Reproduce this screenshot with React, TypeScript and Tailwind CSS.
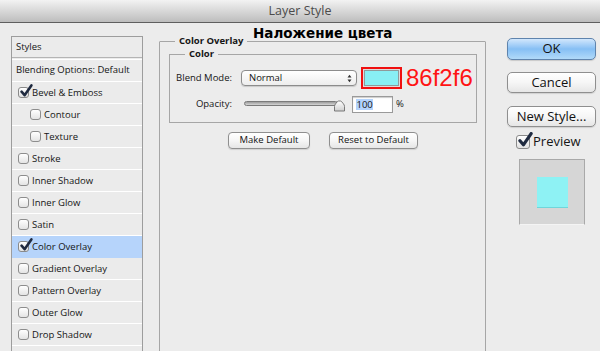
import React from "react";

const Check = ({ size = 11, big = false }: { size?: number; big?: boolean }) => (
  <span
    className={
      "relative inline-block shrink-0 rounded-[3px] border border-[#8a8a8a] bg-gradient-to-b from-white to-[#e2e2e2] shadow-[inset_0_1px_0_rgba(255,255,255,0.8)] " +
      (big ? "w-[14px] h-[14px]" : "w-[11px] h-[11px]")
    }
  >
    <svg
      viewBox="0 0 12 12"
      width={size + 3}
      height={size + 3}
      className="absolute left-[0px] top-[-4px]"
    >
      <path
        d="M2.2 6.6 L4.8 9.6 L10.6 1.2"
        fill="none"
        stroke="#1f2a40"
        strokeWidth={big ? 2.4 : 2.2}
        strokeLinecap="round"
        strokeLinejoin="round"
      />
    </svg>
  </span>
);

const Box = () => (
  <span className="inline-block w-[11px] h-[11px] shrink-0 rounded-[3px] border border-[#8d8d8d] bg-gradient-to-b from-white to-[#e4e4e4]" />
);

type Item = { label: string; checked?: boolean; indent?: boolean; active?: boolean };

const items: Item[] = [
  { label: "Bevel & Emboss", checked: true },
  { label: "Contour", indent: true },
  { label: "Texture", indent: true },
  { label: "Stroke" },
  { label: "Inner Shadow" },
  { label: "Inner Glow" },
  { label: "Satin" },
  { label: "Color Overlay", checked: true, active: true },
  { label: "Gradient Overlay" },
  { label: "Pattern Overlay" },
  { label: "Outer Glow" },
  { label: "Drop Shadow" },
];

const MacButton = ({ children, className = "" }: { children: React.ReactNode; className?: string }) => (
  <div
    className={
      "flex items-center justify-center rounded-[4px] border border-[#8f8f8f] bg-gradient-to-b from-white via-[#f6f6f6] to-[#e6e6e6] shadow-[0_1px_1px_rgba(0,0,0,0.12)] text-[#111] " +
      className
    }
  >
    {children}
  </div>
);

export default function App() {
  return (
    <div className="w-[600px] h-[351px] overflow-hidden bg-[#ececec] font-['Open_Sans',sans-serif] text-[#151515]">
      {/* Title bar */}
      <div className="h-[23px] border-b border-[#5f5f5f] bg-gradient-to-b from-[#f3f3f3] to-[#bdbdbd] flex items-center justify-center text-[12.5px] text-[#4b4b4b]">
        Layer Style
      </div>

      <div className="flex items-start pl-[11px] pt-[11px]">
        {/* Left list */}
        <div className="mt-[2px] w-[132px] h-[330px] shrink-0 border border-[#9d9d9d] bg-[#ebebeb] text-[9.5px]">
          <div className="h-[20px] flex items-center pl-[4px]">Styles</div>
          <div className="h-[3px] border-t border-[#b4b4b4] border-b border-b-white" />
          <div className="h-[22px] flex items-center pl-[4px] border-b border-white">
            Blending Options: Default
          </div>
          {items.map((it) => (
            <div
              key={it.label}
              className={
                "h-[22px] flex items-center gap-[3px] border-b " +
                (it.active ? "bg-[#b6d4fb] border-[#b6d4fb] " : "border-white ") +
                (it.indent ? "pl-[18px]" : "pl-[6px]")
              }
            >
              {it.checked ? <Check /> : <Box />}
              <span className="leading-none">{it.label}</span>
            </div>
          ))}
        </div>

        {/* Middle */}
        <div className="relative ml-[16px] w-[327px] shrink-0">
          <fieldset className="h-[320px] border border-[#a6a6a6] rounded-[1px]">
            <legend className="ml-[15px] px-[4px] text-[9.5px] font-bold leading-[14px]">Color Overlay</legend>
            <fieldset className="ml-[9px] w-[308px] border border-[#a6a6a6] pb-[9px]">
              <legend className="ml-[15px] px-[4px] text-[9.5px] font-bold leading-[12px]">Color</legend>
              <div className="mt-[7px] flex items-center h-[22px] text-[9.5px]">
                <div className="w-[62px] text-right">Blend Mode:</div>
                <div className="ml-[9px] w-[116px] h-[16px] rounded-[4px] border border-[#8c8c8c] bg-gradient-to-b from-white to-[#ededed] shadow-[0_1px_1px_rgba(0,0,0,0.15)] flex items-center pl-[7px] pr-[4px] justify-between">
                  <span>Normal</span>
                  <svg width="5" height="9" viewBox="0 0 5 9">
                    <path d="M0.5 3.5 L2.5 0.8 L4.5 3.5 Z M0.5 5.5 L2.5 8.2 L4.5 5.5 Z" fill="#333" />
                  </svg>
                </div>
                <div className="ml-[4px] w-[41px] h-[22px] border-2 border-[#f01010] p-[1px] bg-[#dcdcdc]">
                  <div className="w-full h-full border border-[#8f9a9a] bg-[#88eff4]" />
                </div>
                <div className="ml-[4px] text-[24px] leading-[22px] text-[#ff1414] font-['Liberation_Sans',Arial,sans-serif]">
                  86f2f6
                </div>
              </div>
              <div className="mt-[7px] flex items-center h-[17px] text-[9.5px]">
                <div className="w-[62px] text-right">Opacity:</div>
                <div className="relative ml-[12px] w-[101px] h-[16px]">
                  <div className="absolute left-0 top-[4px] w-[94px] h-[5px] rounded-full border border-[#7a7a7a] bg-gradient-to-b from-[#9c9c9c] to-[#d6d6d6]" />
                  <svg className="absolute left-[90px] top-[0px]" width="11" height="15" viewBox="0 0 11 15">
                    <defs>
                      <linearGradient id="th" x1="0" y1="0" x2="0" y2="1">
                        <stop offset="0" stopColor="#ffffff" />
                        <stop offset="1" stopColor="#cfcfcf" />
                      </linearGradient>
                    </defs>
                    <path
                      d="M0.5 14 L0.5 9.5 Q0.5 8 1.6 6.8 L3.6 4.4 Q4 4 4.6 4 L6.4 4 Q7 4 7.4 4.4 L9.4 6.8 Q10.5 8 10.5 9.5 L10.5 14 Z"
                      fill="url(#th)"
                      stroke="#6d6d6d"
                      strokeWidth="0.9"
                    />
                  </svg>
                </div>
                <div className="ml-[7px] w-[41px] h-[17px] border border-[#9a9a9a] bg-white shadow-[inset_0_1px_1px_rgba(0,0,0,0.2)] flex items-center pl-[3px]">
                  <span className="bg-[#b3d3fc] leading-[11px] px-[0.5px]">100</span>
                </div>
                <div className="ml-[3px]">%</div>
              </div>
            </fieldset>
            <div className="mt-[9px] flex pl-[68px] gap-[19px] text-[9.5px]">
              <MacButton className="w-[82px] h-[17px]">Make Default</MacButton>
              <MacButton className="w-[89px] h-[17px]">Reset to Default</MacButton>
            </div>
          </fieldset>
          <div className="absolute left-[94px] top-[-8px] text-[13.5px] leading-[14px] font-bold text-black font-['DejaVu_Sans',sans-serif]">
            Наложение цвета
          </div>
        </div>

        {/* Right */}
        <div className="ml-[21px] w-[89px] shrink-0 flex flex-col text-[13px]">
          <div className="mt-[4px] h-[22px] rounded-[5px] border border-[#5f84ad] bg-gradient-to-b from-[#d2e7fc] via-[#86bff4] to-[#b1daf9] shadow-[0_1px_1px_rgba(0,0,0,0.15)] flex items-center justify-center text-[#111]">
            OK
          </div>
          <MacButton className="mt-[12px] h-[21px] rounded-[5px]">Cancel</MacButton>
          <MacButton className="mt-[13px] h-[21px] rounded-[5px]">New Style...</MacButton>
          <div className="mt-[5px] h-[19px] flex items-center pl-[9px] gap-[3px]">
            <Check size={13} big />
            <span>Preview</span>
          </div>
          <div className="mt-[8px] ml-[12px] w-[66px] h-[66px] border border-[#a9a9a9] border-b-[#f4f4f4] bg-[#d6d6d6] flex items-center justify-center">
            <div className="w-[31px] h-[31px] bg-[#8ef2f4] border-b border-[#6fd6da]" />
          </div>
        </div>
      </div>
    </div>
  );
}
